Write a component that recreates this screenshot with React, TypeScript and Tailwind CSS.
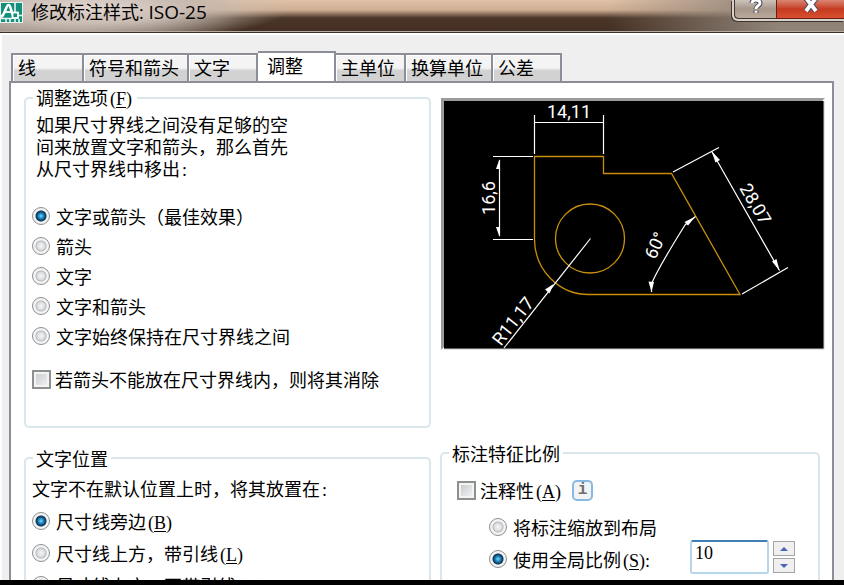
import { useState } from 'react';
import type { ReactNode } from 'react';
import clsx from 'clsx';

const TABS = [
  { label: '线', width: 'w-[73px]' },
  { label: '符号和箭头', width: 'w-[105px]' },
  { label: '文字', width: 'w-[69px]' },
  { label: '调整', width: 'w-[78px]' },
  { label: '主单位', width: 'w-[70px]' },
  { label: '换算单位', width: 'w-[87px]' },
  { label: '公差', width: 'w-[69px]' },
];

const FIT_OPTIONS = [
  '文字或箭头（最佳效果）',
  '箭头',
  '文字',
  '文字和箭头',
  '文字始终保持在尺寸界线之间',
];

const PLACEMENTS = [
  { label: '尺寸线旁边', hotkey: 'B' },
  { label: '尺寸线上方，带引线', hotkey: 'L' },
  { label: '尺寸线上方，不带引线', hotkey: 'O' },
];

const Latin = ({ children }: { children: ReactNode }) => (
  <span className="px-[2px] font-['Liberation_Serif',serif] leading-none">
    {children}
  </span>
);

const Hotkey = ({ letter, after }: { letter: string; after?: string }) => (
  <Latin>
    (<u className="underline-offset-2">{letter}</u>){after}
  </Latin>
);

type RadioProps = {
  name: string;
  checked: boolean;
  onChange: () => void;
  height: string;
  children: ReactNode;
};

const Radio = ({ name, checked, onChange, height, children }: RadioProps) => (
  <label className={clsx('flex items-center gap-[6px] whitespace-nowrap', height)}>
    <input
      type="radio"
      name={name}
      checked={checked}
      onChange={onChange}
      className="size-[18px] shrink-0 appearance-none rounded-full border border-[#8e8f8f] bg-[radial-gradient(circle,#f6f6f6_0,#d9dbde_4px,#b4b9be_5px,#f4f4f4_6px,#f4f4f4_8px)] checked:bg-[radial-gradient(circle_at_50%_50%,#7fd4f5_0,#2b9bd0_2px,#0f4f80_4px,#123553_5px,#f4f4f4_6px,#f4f4f4_8px)]"
    />
    <span>{children}</span>
  </label>
);

const Checkbox = ({ children }: { children: ReactNode }) => (
  <label className="flex h-[30px] items-center gap-1 whitespace-nowrap">
    <input
      type="checkbox"
      className="size-[19px] shrink-0 appearance-none border-2 border-[#8e8f8f] bg-linear-to-br from-[#c3c8ce] to-[#f6f6f6] shadow-[inset_0_0_0_2px_#f4f4f4] checked:bg-[#2b9bd0]"
    />
    <span>{children}</span>
  </label>
);

const Group = ({
  title,
  className,
  children,
}: {
  title: ReactNode;
  className?: string;
  children: ReactNode;
}) => (
  <fieldset
    className={clsx('min-w-0 rounded-[5px] border-2 border-[#dae6ec] px-[6px]', className)}
  >
    <legend className="ml-[1px] px-[3px] leading-5">{title}</legend>
    {children}
  </fieldset>
);

const AppIcon = () => (
  <svg viewBox="0 0 24 24" className="size-6" aria-hidden="true">
    <rect x="0" y="2" width="23" height="21" fill="#e8f4f1" />
    <rect x="1" y="3" width="21" height="19" fill="#148f7c" />
    <path d="M1 17C5 15 6 5 8.500 5s2 6 4.500 10" fill="none" stroke="#fff" strokeWidth="2.600" />
    <path d="M5 12h6" stroke="#fff" strokeWidth="1.800" />
    <path d="M15 3v9M15 19v3M1 18.500h11M19 15.500h3M6 19v4M10 19v4M19 19v4" stroke="#e8f4f1" strokeWidth="1.600" />
    <rect x="12.500" y="12.500" width="5.500" height="5.500" fill="#148f7c" stroke="#fff" strokeWidth="1.800" />
  </svg>
);

const TitleBar = () => (
  <header className="h-[35px] shrink-0 border-b-2 border-white bg-[#3f3028]">
    <div className="flex h-[31px] items-start justify-between bg-[radial-gradient(ellipse_200px_34px_at_90px_8px,#e2d6d0_0,#c9bcb3_45%,transparent_100%),linear-gradient(to_right,#8f8378_0,#8f8378_10%,transparent_28%,transparent_72%,#8f8378_92%),linear-gradient(to_bottom,#dfc2a8_0,#cfae93_10px,#4a3527_18px,#432f22_100%)]">
      <div className="flex items-center gap-[7px]">
        <AppIcon />
        <h1 className="font-['Open_Sans','Noto_Sans_CJK_SC',sans-serif] text-[18px] leading-6">
          修改标注样式: <span className="text-[19px]">ISO-25</span>
        </h1>
      </div>
      <div className="flex h-[21px] rounded-bl-[6px] border-b-2 border-l-2 border-[#d8d2cc] shadow-[-1px_1px_0_#40352d]">
        <button
          type="button"
          aria-label="帮助"
          className="flex w-[42px] justify-center rounded-bl-[5px] border-b border-l border-[#40352d] bg-linear-to-b from-[#cfc3ba] via-[#a59689] to-[#b9aa9c]"
        >
          <svg viewBox="0 0 16 16" className="size-4" aria-hidden="true">
            <path d="M4 3C4-1 12-1 12 3c0 3-4 2.500-4 6M8 10.500v2.500" fill="none" stroke="#4c4f63" strokeWidth="5" />
            <path d="M4 3C4-1 12-1 12 3c0 3-4 2.500-4 6M8 10.800v2" fill="none" stroke="#fff" strokeWidth="2.800" />
          </svg>
        </button>
        <button
          type="button"
          aria-label="关闭"
          className="flex w-[68px] justify-center border-b border-l border-[#6b1d12] bg-linear-to-b from-[#d98573] via-[#c53a20] to-[#d9502f]"
        >
          <svg viewBox="0 0 18 16" className="h-4 w-[18px]" aria-hidden="true">
            <path d="M4-2l10 13M14-2L4 11" stroke="#4c4f63" strokeWidth="6" />
            <path d="M4-2l10 13M14-2L4 11" stroke="#fff" strokeWidth="3.800" />
          </svg>
        </button>
      </div>
    </div>
    <div className="h-[2px] border-t border-[#b5aaa2]" />
  </header>
);

const Preview = () => (
  <svg viewBox="0 0 384 252" className="block w-full" role="img" aria-label="预览">
    <path d="M0 0H384L380 4H4V248L0 252z" fill="#9b9b9b" />
    <path d="M3 3h380v248H3z" fill="#000" />
    <path d="M3 251h380V3" fill="none" stroke="#c8c8c8" />
    <g fill="none" stroke="#c8900a" strokeWidth="1.300">
      <path d="M93.500 141V58.500H162.500V75.500H230.500L299 196.500H147.500A54 55.500 0 0 1 93.500 141" />
      <circle cx="149" cy="140.500" r="34.500" />
    </g>
    <g fill="none" stroke="#fff" strokeWidth="1.200">
      <path d="M93.500 17V56M162.500 17V56M93.500 24.500H162.500" />
      <path d="M52 58.500H92M52 141.500H92M58.500 62V138" />
      <path d="M149.500 140.500L63 250" />
      <path d="M232 74L278 49.500M301 196L347 169.500M270.500 53L338.500 172.500" />
      <path d="M254.500 118.500L244 127Q216 172 210.500 186V194" />
    </g>
    <g fill="#fff">
      <path d="M58.500 61L55 71H59zM58.500 139L55 129H59z" />
      <path d="M112.500 186L108.500 195.500L104 191.500z" />
      <path d="M270.500 53L279 62L274.500 64.500zM338.500 172.500L335.500 161L331 163.500z" />
      <path d="M254.500 118.500L247 127.500L243.500 124zM210.500 194L207.500 183.500L213 184z" />
    </g>
    <g
      fill="#fff"
      textAnchor="middle"
      className="font-['Roboto',sans-serif] text-[18px]"
    >
      <text x="128" y="20">14,11</text>
      <text transform="translate(54 100) rotate(-90)">16,6</text>
      <text transform="translate(77 227) rotate(-52)">R11,17</text>
      <text transform="translate(309 109) rotate(60)">28,07</text>
      <text transform="translate(220 150) rotate(-65)">60°</text>
    </g>
  </svg>
);

const App = () => {
  const [fit, setFit] = useState(0);
  const [placement, setPlacement] = useState(0);
  const [scaleMode, setScaleMode] = useState('overall');
  const [scale, setScale] = useState(10);

  return (
    <div className="flex h-screen flex-col overflow-hidden bg-[#efefef] font-['Noto_Sans_CJK_SC',sans-serif] text-[18px] leading-[22px] text-black">
      <TitleBar />
      <main className="flex min-h-0 flex-1 flex-col overflow-hidden border-l-2 border-white pr-[10px] pl-[7px]">
        <nav role="tablist" className="mt-4 flex items-end pl-[2px]">
          {TABS.map(({ label, width }) => (
            <button
              key={label}
              type="button"
              role="tab"
              aria-selected={label === '调整'}
              className={clsx(
                'border-t-2 border-[#8b8e99] text-left whitespace-nowrap',
                width,
                label === '调整'
                  ? '-mb-[2px] h-8 border-r-2 bg-white pb-[6px] pl-[9px]'
                  : 'h-7 border-r-2 bg-linear-to-b from-[#f4f4f4] from-50% to-[#d2d2d2] to-60% pb-[2px] pl-[5px] shadow-[inset_1px_1px_0_#fff] first:border-l-2'
              )}
            >
              {label}
            </button>
          ))}
        </nav>
        <div className="grid min-h-[600px] flex-1 grid-cols-[407fr_385fr] gap-[9px] border-2 border-[#8b8e99] bg-white pt-1 pr-[7px] pl-[13px]">
          <div>
            <Group title={<>调整选项<Hotkey letter="F" /></>} className="pb-8">
              <p className="max-w-[260px] pt-[5px] pl-1">
                如果尺寸界线之间没有足够的空间来放置文字和箭头，那么首先从尺寸界线中移出<Latin>:</Latin>
              </p>
              <div className="pt-[22px]">
                {FIT_OPTIONS.map((option, i) => (
                  <Radio
                    key={option}
                    name="fit"
                    height="h-[30px]"
                    checked={fit === i}
                    onChange={() => setFit(i)}
                  >
                    {option}
                  </Radio>
                ))}
              </div>
              <div className="pt-[13px]">
                <Checkbox>若箭头不能放在尺寸界线内，则将其消除</Checkbox>
              </div>
            </Group>
            <Group title="文字位置" className="mt-5 pb-5">
              <p className="pt-[9px] pb-[6px]">
                文字不在默认位置上时，将其放置在<Latin>:</Latin>
              </p>
              {PLACEMENTS.map(({ label, hotkey }, i) => (
                <Radio
                  key={label}
                  name="placement"
                  height="h-8"
                  checked={placement === i}
                  onChange={() => setPlacement(i)}
                >
                  {label}
                  <Hotkey letter={hotkey} />
                </Radio>
              ))}
            </Group>
          </div>
          <div>
            <div className="pt-[11px] pl-px">
              <Preview />
            </div>
            <Group title="标注特征比例" className="mt-[93px] mr-[5px] pb-10">
              <div className="flex items-center gap-[9px] pt-3 pl-[9px]">
                <Checkbox>
                  注释性
                  <Hotkey letter="A" />
                </Checkbox>
                <button
                  type="button"
                  className="size-[21px] rounded-[5px] border-2 border-[#86b9e3] bg-[#f1f3f5] font-['Liberation_Mono',monospace] text-[16px] leading-4 font-bold text-[#6d6d6d]"
                >
                  i
                </button>
              </div>
              <div className="flex items-end pt-[6px] pl-[41px]">
                <div className="flex-1">
                  <Radio
                    name="scale"
                    height="h-8"
                    checked={scaleMode === 'layout'}
                    onChange={() => setScaleMode('layout')}
                  >
                    将标注缩放到布局
                  </Radio>
                  <Radio
                    name="scale"
                    height="h-8"
                    checked={scaleMode === 'overall'}
                    onChange={() => setScaleMode('overall')}
                  >
                    使用全局比例
                    <Hotkey letter="S" after=":" />
                  </Radio>
                </div>
                <div className="mr-[17px] mb-px flex items-center gap-1">
                  <input
                    type="text"
                    aria-label="全局比例"
                    value={scale}
                    onChange={(e) => setScale(Number(e.target.value) || 0)}
                    className="h-[34px] w-[79px] rounded-[3px] border-2 border-[#b5d6ec] border-t-[#3f7fb5] pb-2 pl-[3px] font-['Liberation_Serif',serif] text-[18px]"
                  />
                  <div className="flex flex-col gap-[2px]">
                    {[1, -1].map((step) => (
                      <button
                        key={step}
                        type="button"
                        aria-label={step > 0 ? '增加' : '减少'}
                        onClick={() => setScale((s) => s + step)}
                        className="flex h-[15px] w-[22px] items-center justify-center border border-[#a5a5a5] bg-[#f0f0f0]"
                      >
                        <svg viewBox="0 0 8 4" className="h-1 w-2" aria-hidden="true">
                          <path d={step > 0 ? 'M0 4L4 0l4 4z' : 'M0 0h8L4 4z'} fill="#4a62b8" />
                        </svg>
                      </button>
                    ))}
                  </div>
                </div>
              </div>
            </Group>
          </div>
        </div>
      </main>
      <footer className="h-[5px] shrink-0 bg-black" />
    </div>
  );
};

export default App;
